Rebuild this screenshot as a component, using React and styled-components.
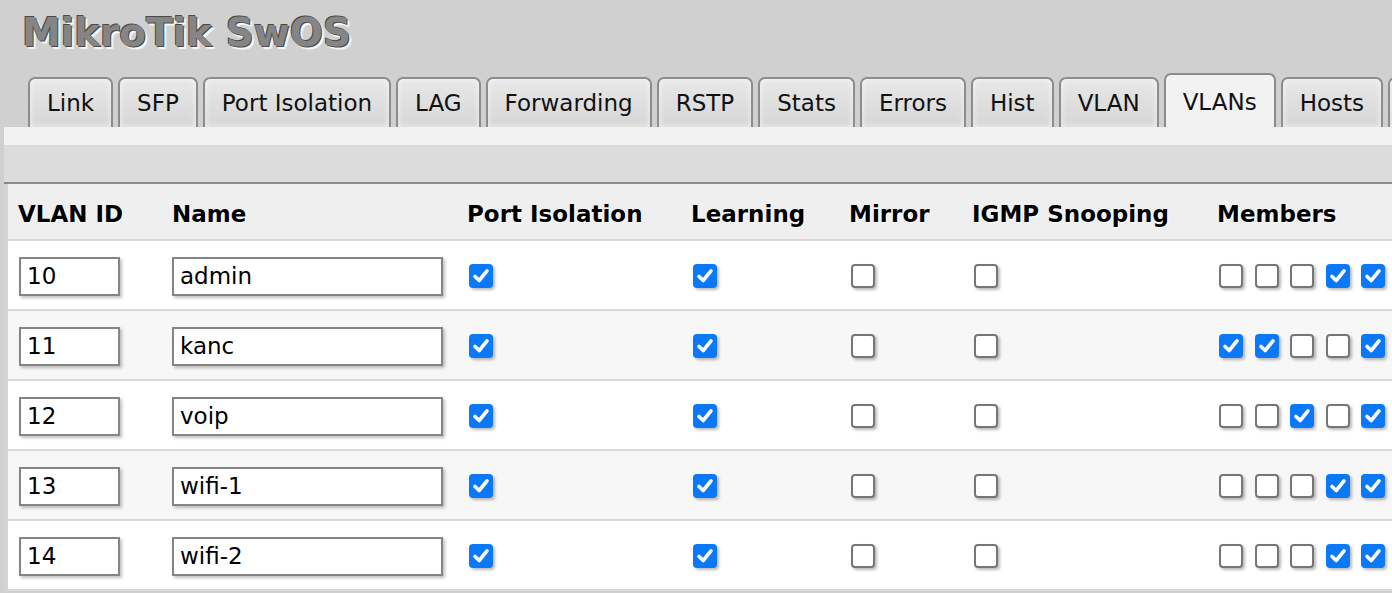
import styled, { createGlobalStyle } from "styled-components";

const Global = createGlobalStyle`
    html, body {
        margin: 0;
        padding: 0;
        background: #d0d0d0;
        font-family: "DejaVu Sans", Verdana, sans-serif;
        overflow: hidden;
    }
`;

const Page = styled.div`
    width: 1392px;
    height: 593px;
    overflow: hidden;
    background: #d0d0d0;
`;

const Title = styled.h1`
    margin: 0;
    padding: 10px 0 0 22px;
    height: 66px;
    box-sizing: border-box;
    font-size: 39px;
    font-weight: bold;
    color: #858585;
    line-height: 46px;
    text-shadow: -1px -1px 0 #4a4a4a, 1px 1px 0 #4a4a4a, 3px 3px 1px #f8f8f8;
`;

const TabBar = styled.div`
    display: flex;
    align-items: flex-end;
    gap: 5px;
    padding-left: 28px;
    height: 61px;
    white-space: nowrap;
`;

const Tab = styled.div`
    flex: none;
    box-sizing: border-box;
    height: ${(p) => (p.$active ? "54px" : "50px")};
    padding: 0 17px;
    padding-top: ${(p) => (p.$active ? "2px" : "0")};
    display: flex;
    align-items: center;
    font-size: 23px;
    color: #111;
    border: 2px solid #8c8c8c;
    border-bottom: none;
    border-radius: 7px 7px 0 0;
    background: ${(p) =>
        p.$active
            ? "#f2f2f2"
            : "linear-gradient(#e8e8e8, #d6d6d6)"};
    box-shadow: ${(p) => (p.$active ? "none" : "inset 0 0 6px rgba(255,255,255,0.7)")};
`;

const Panel = styled.div`
    margin-left: 4px;
    background: #f2f2f2;
    padding-top: 18px;
`;

const Toolbar = styled.div`
    height: 37px;
    background: #dcdcdc;
    border-bottom: 2px solid #8a8a8a;
`;

const TableWrap = styled.div`
    background: #d4d4d4;
    padding-left: 4px;
`;

const cols = "154px 295px 224px 158px 123px 245px 1fr";

const HeadRow = styled.div`
    display: grid;
    grid-template-columns: ${cols};
    height: 57px;
    box-sizing: border-box;
    padding-top: 4px;
    align-items: center;
    background: #efefef;
    border-bottom: 2px solid #d9d9d9;
`;

const HeadCell = styled.div`
    padding-left: 10px;
    font-size: 23px;
    font-weight: bold;
    color: #000;
    text-shadow: 1px 1px 1px #fff;
    white-space: nowrap;
`;

const Row = styled.div`
    display: grid;
    grid-template-columns: ${cols};
    height: 70px;
    box-sizing: border-box;
    padding-top: 2px;
    align-items: center;
    background: ${(p) => (p.$odd ? "#f7f7f7" : "#ffffff")};
    border-bottom: 2px solid #d9d9d9;
`;

const Cell = styled.div`
    padding-left: ${(p) => p.$pad || "12px"};
    display: flex;
    align-items: center;
    gap: 11.5px;
    white-space: nowrap;
`;

const TextInput = styled.div`
    box-sizing: border-box;
    width: ${(p) => p.$w};
    height: 39px;
    border: 2px solid #858585;
    background: #fff;
    padding-left: 6px;
    display: flex;
    align-items: center;
    font-size: 23px;
    color: #000;
    box-shadow: 2px 2px 3px rgba(0, 0, 0, 0.25);
`;

const Box = styled.span`
    box-sizing: border-box;
    flex: none;
    width: 24px;
    height: 24px;
    border-radius: 4px;
    display: inline-flex;
    align-items: center;
    justify-content: center;
    background: ${(p) => (p.$checked ? "#0a78f7" : "#fff")};
    border: ${(p) => (p.$checked ? "none" : "2px solid #767676")};
    box-shadow: 2px 2px 3px rgba(0, 0, 0, 0.28);
`;

const Check = ({ on }) => (
    <Box $checked={on}>
        {on && (
            <svg width="20" height="20" viewBox="0 0 20 20">
                <path d="M4 10.5 L8.2 14.5 L16 4.8" fill="none" stroke="#fff" strokeWidth="3.6" strokeLinecap="round" strokeLinejoin="round" />
            </svg>
        )}
    </Box>
);

const tabs = ["Link", "SFP", "Port Isolation", "LAG", "Forwarding", "RSTP", "Stats", "Errors", "Hist", "VLAN", "VLANs", "Hosts", "IGMP"];

const vlans = [
    { id: "10", name: "admin", members: [0, 0, 0, 1, 1] },
    { id: "11", name: "kanc", members: [1, 1, 0, 0, 1] },
    { id: "12", name: "voip", members: [0, 0, 1, 0, 1] },
    { id: "13", name: "wifi-1", members: [0, 0, 0, 1, 1] },
    { id: "14", name: "wifi-2", members: [0, 0, 0, 1, 1] },
];

const App = () => {
    return (
        <Page>
            <Global />
            <Title>MikroTik SwOS</Title>
            <TabBar>
                {tabs.map((t) => (
                    <Tab key={t} $active={t === "VLANs"}>{t}</Tab>
                ))}
            </TabBar>
            <Panel>
                <Toolbar />
                <TableWrap>
                    <HeadRow>
                        <HeadCell>VLAN ID</HeadCell>
                        <HeadCell>Name</HeadCell>
                        <HeadCell>Port Isolation</HeadCell>
                        <HeadCell>Learning</HeadCell>
                        <HeadCell>Mirror</HeadCell>
                        <HeadCell>IGMP Snooping</HeadCell>
                        <HeadCell>Members</HeadCell>
                    </HeadRow>
                    {vlans.map((v, i) => (
                        <Row key={v.id} $odd={i % 2 === 1}>
                            <Cell $pad="11px"><TextInput $w="101px">{v.id}</TextInput></Cell>
                            <Cell $pad="10px"><TextInput $w="271px">{v.name}</TextInput></Cell>
                            <Cell><Check on /></Cell>
                            <Cell><Check on /></Cell>
                            <Cell><Check /></Cell>
                            <Cell><Check /></Cell>
                            <Cell>
                                {v.members.map((m, j) => (
                                    <Check key={j} on={!!m} />
                                ))}
                            </Cell>
                        </Row>
                    ))}
                </TableWrap>
            </Panel>
        </Page>
    );
};

export default App;
